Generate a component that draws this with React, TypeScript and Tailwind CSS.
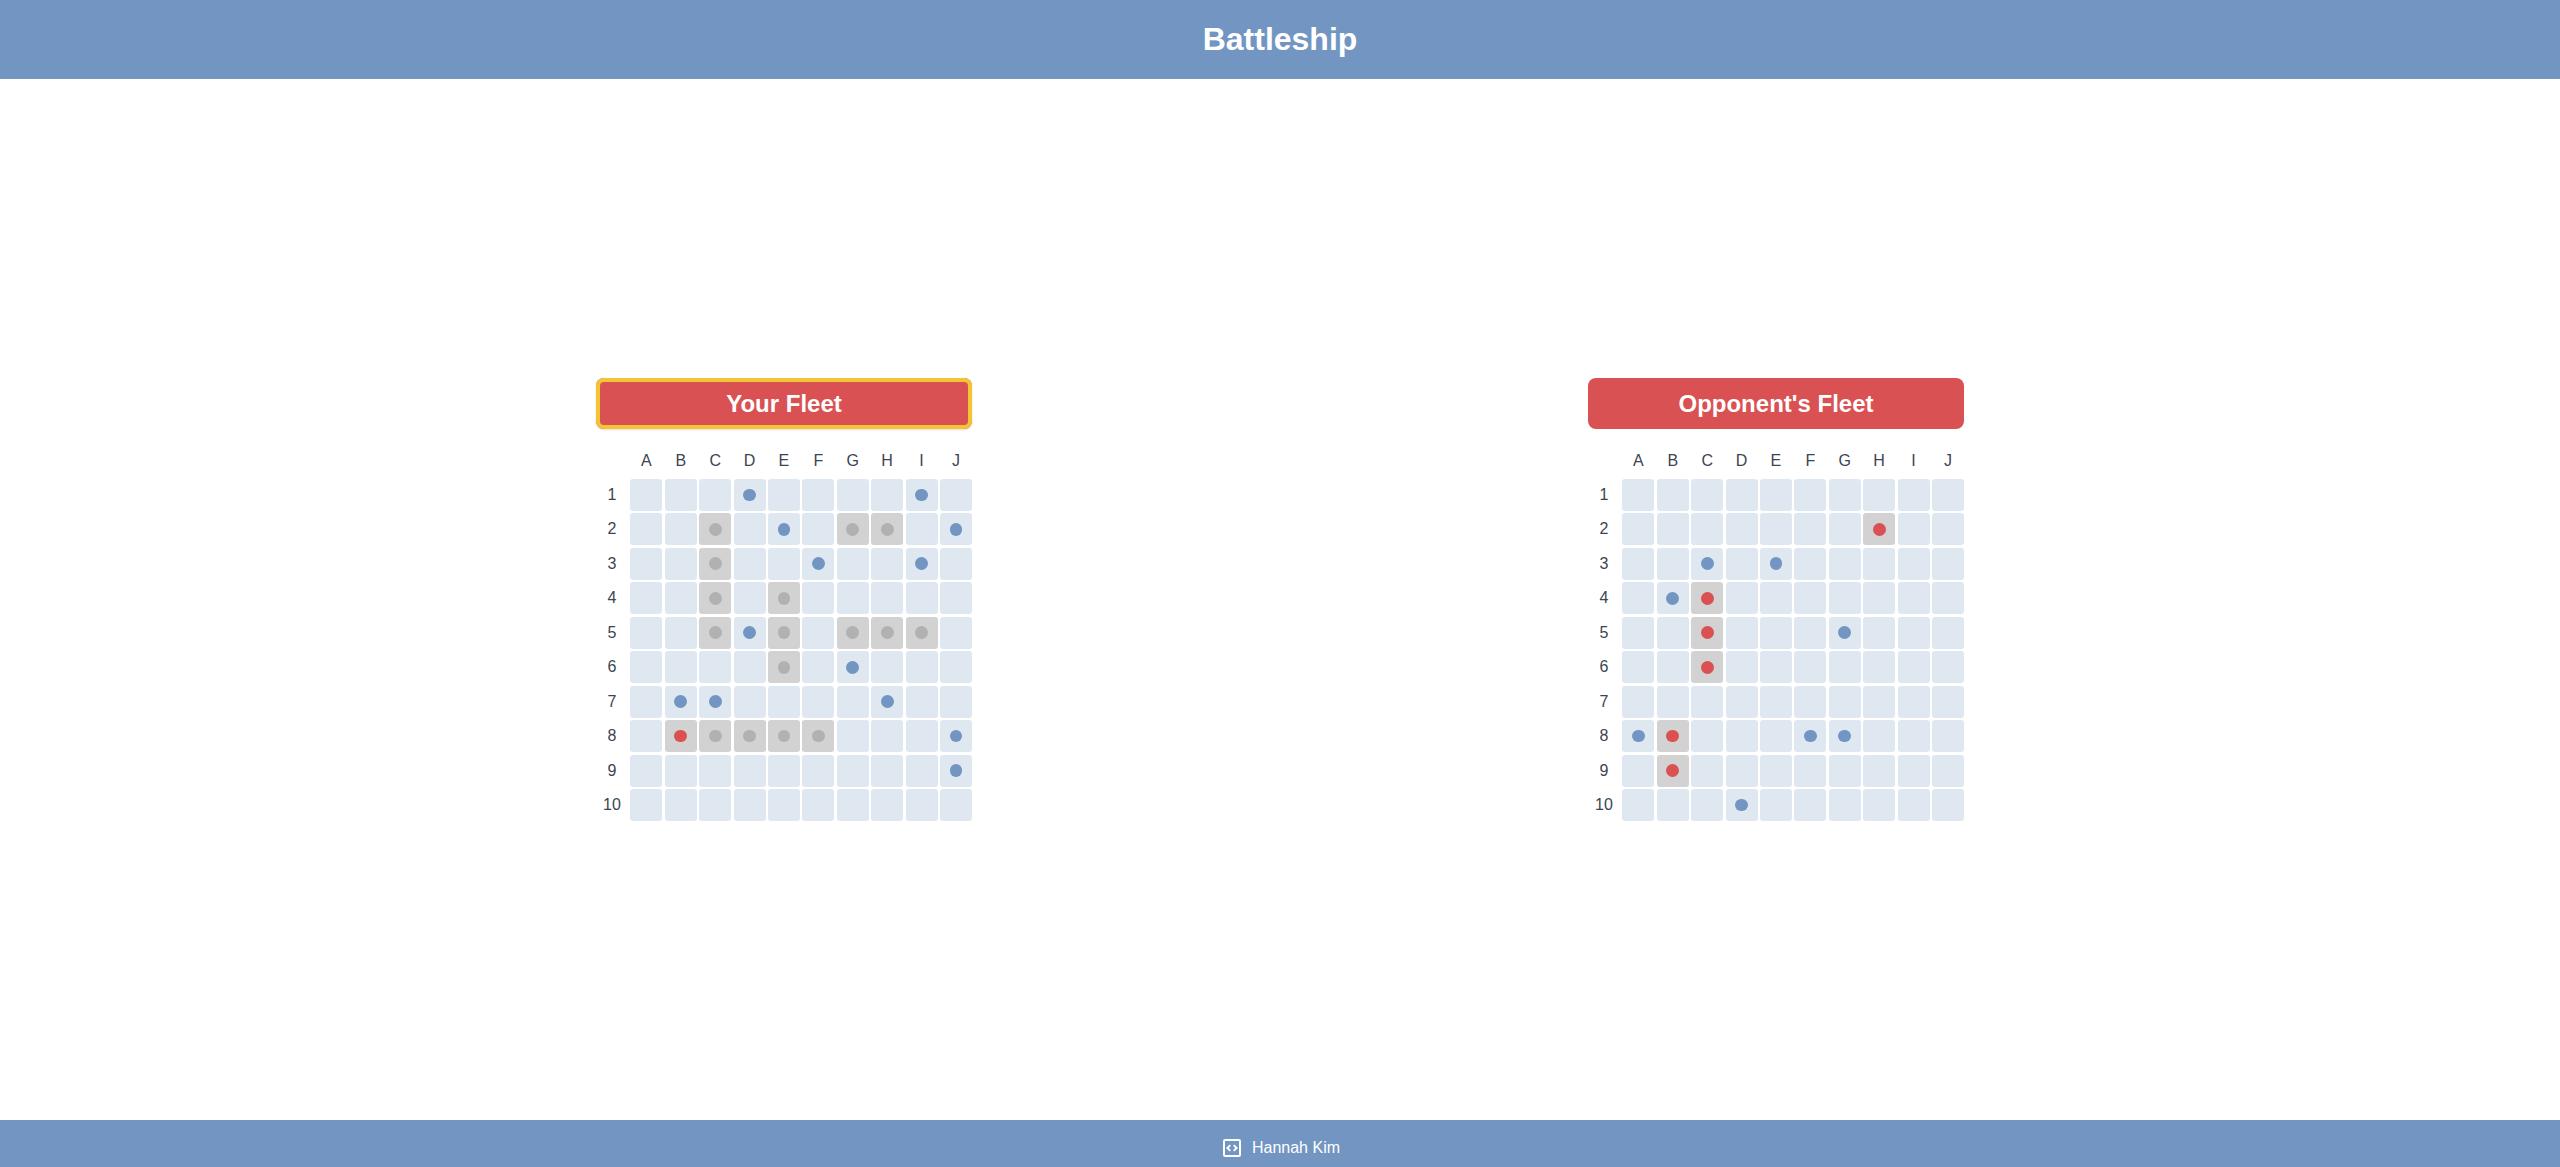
type Mark = "miss" | "hit" | "ship" | "empty";

const COLS = ["A", "B", "C", "D", "E", "F", "G", "H", "I", "J"];
const ROWS = [1, 2, 3, 4, 5, 6, 7, 8, 9, 10];

interface Fleet {
  title: string;
  active: boolean;
  ships: string[];
  hits: string[];
  misses: string[];
}

const yourFleet: Fleet = {
  title: "Your Fleet",
  active: true,
  ships: [
    "C2", "C3", "C4", "C5", "E4", "E5", "E6", "G2", "H2",
    "G5", "H5", "I5", "C8", "D8", "E8", "F8",
  ],
  hits: ["B8"],
  misses: ["D1", "I1", "E2", "J2", "F3", "I3", "D5", "G6", "B7", "C7", "H7", "J8", "J9"],
};

const opponentFleet: Fleet = {
  title: "Opponent's Fleet",
  active: false,
  ships: [],
  hits: ["H2", "C4", "C5", "C6", "B8", "B9"],
  misses: ["C3", "E3", "B4", "G5", "A8", "F8", "G8", "D10"],
};

const cellColor: Record<Mark, string> = {
  miss: "bg-[#dfe7f1]",
  empty: "bg-[#dfe7f1]",
  hit: "bg-[#d2d2d2]",
  ship: "bg-[#d2d2d2]",
};

const dotColor: Record<Mark, string> = {
  miss: "bg-[#7295c2]",
  empty: "bg-transparent",
  hit: "bg-[#d95152]",
  ship: "bg-[#b1b1b1]",
};

function markAt(fleet: Fleet, id: string): Mark {
  if (fleet.hits.includes(id)) return "hit";
  if (fleet.misses.includes(id)) return "miss";
  if (fleet.ships.includes(id)) return "ship";
  return "empty";
}

function Cell({ id, mark }: { id: string; mark: Mark }) {
  return (
    <td className="size-8 p-0">
      <button
        type="button"
        aria-label={`${id} ${mark}`}
        className={`flex size-8 items-center justify-center rounded-[3px] ${cellColor[mark]}`}
      >
        <span className={`size-[40%] rounded-full ${dotColor[mark]}`} />
      </button>
    </td>
  );
}

function Board({ fleet }: { fleet: Fleet }) {
  return (
    <section className="flex w-[376px] flex-col gap-4">
      <h2
        className={`rounded-lg bg-[#d95152] py-3 text-center text-2xl leading-[27px] font-bold text-white ${
          fleet.active ? "shadow-sm inset-ring-4 inset-ring-[#f3c433]" : ""
        }`}
      >
        {fleet.title}
      </h2>
      <table aria-label={fleet.title} className="flex h-[376px] flex-col text-base text-[#3d4451]">
        <thead className="contents">
          <tr className="flex justify-between">
            <td className="size-8 p-0" />
            {COLS.map((c) => (
              <th key={c} scope="col" className="flex size-8 items-center justify-center p-0 font-normal">
                {c}
              </th>
            ))}
          </tr>
        </thead>
        <tbody className="flex grow flex-col justify-between pt-0.5">
          {ROWS.map((r) => (
            <tr key={r} className="flex justify-between">
              <th scope="row" className="flex size-8 items-center justify-center p-0 font-normal">
                {r}
              </th>
              {COLS.map((c) => (
                <Cell key={c} id={`${c}${r}`} mark={markAt(fleet, `${c}${r}`)} />
              ))}
            </tr>
          ))}
        </tbody>
      </table>
    </section>
  );
}

export default function App() {
  return (
    <div className="flex min-h-screen flex-col bg-white font-['Liberation_Sans',Arial,sans-serif]">
      <header className="bg-[#7295c2] px-4 py-5 text-center">
        <h1 className="text-[32px] leading-[39px] font-bold text-white">Battleship</h1>
      </header>
      <main className="flex grow flex-wrap items-center justify-evenly gap-5">
        <Board fleet={yourFleet} />
        <Board fleet={opponentFleet} />
      </main>
      <footer className="flex justify-center bg-[#7295c2] pt-4 pb-[7px] text-white">
        <a href="#author" className="flex items-center gap-2">
          <svg viewBox="0 0 24 24" className="size-6" fill="currentColor" aria-hidden="true">
            <path d="M19 3H5a2 2 0 0 0-2 2v14a2 2 0 0 0 2 2h14a2 2 0 0 0 2-2V5a2 2 0 0 0-2-2zm0 16H5V5h14v14z" />
            <path d="M11 14.17 8.83 12 11 9.83 9.59 8.41 6 12l3.59 3.59zM14.41 15.59 18 12l-3.59-3.59L13 9.83 15.17 12 13 14.17z" />
          </svg>
          <span>Hannah Kim</span>
        </a>
      </footer>
    </div>
  );
}
